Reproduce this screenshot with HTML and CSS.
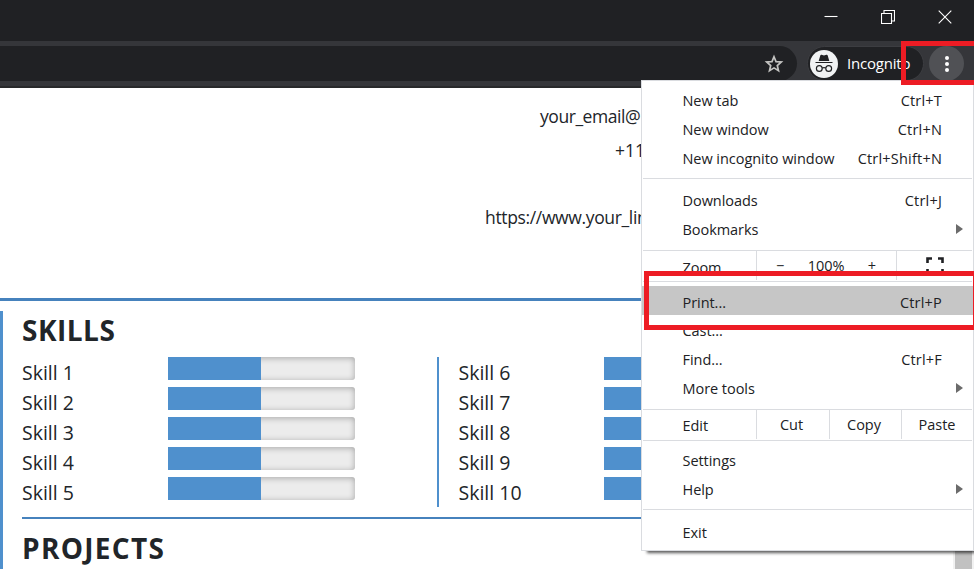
FILE: index.html
```html
<!DOCTYPE html>
<html lang="en">
<head>
<meta charset="utf-8">
<title>Resume</title>
<link rel="stylesheet" href="styles.css">
</head>
<body>
<div class="browser">
  <header class="titlebar">
    <svg width="14" height="14" viewBox="0 0 14 14"><path d="M.5 6.5h13"/></svg>
    <svg width="14" height="14" viewBox="0 0 14 14"><path d="M.5 3.5h10v10H.5zM3 3V.5h10.500v10.500H11"/></svg>
    <svg width="14" height="14" viewBox="0 0 14 14"><path d="M.7.7l12.600 12.600M13.300.7L.7 13.300"/></svg>
  </header>
  <div class="toolbar">
    <div class="address">
      <svg width="20" height="20" viewBox="0 0 20 20"><path d="M10 2.700l2 4.900 5.300.4-4 3.500 1.200 5.200L10 13.900l-4.500 2.800 1.200-5.200-4-3.500 5.300-.4z"/></svg>
    </div>
    <div class="profile">
      <svg width="28" height="28" viewBox="0 0 28 28"><circle cx="14" cy="14" r="14" fill="#f1f3f4"/><path d="M10.300 5.500q.3-1 1.300-.7l2.400.6 2.400-.6q1-.3 1.300.7L19.300 11H8.700zM5.500 12h17v1.100h-17z" fill="#202124"/><g fill="none" stroke="#202124" stroke-width="1.200"><circle cx="9.300" cy="18.500" r="2.900"/><circle cx="18.700" cy="18.500" r="2.900"/><path d="M12.200 18q1.800-.8 3.600 0"/></g></svg>
      <span>Incognito</span>
    </div>
    <div class="more"><i></i><i></i><i></i></div>
  </div>

  <main class="page">
    <section class="contact">
      <p class="email">your_email@</p>
      <p class="phone">+11</p>
      <p class="link">https://www.your_lin</p>
    </section>
    <section class="body">
      <h2 class="h-skills">SKILLS</h2>
      <div class="skills">
        <div class="col">
          <div class="skill"><span>Skill 1</span><div class="bar"><b></b></div></div>
          <div class="skill"><span>Skill 2</span><div class="bar"><b></b></div></div>
          <div class="skill"><span>Skill 3</span><div class="bar"><b></b></div></div>
          <div class="skill"><span>Skill 4</span><div class="bar"><b></b></div></div>
          <div class="skill"><span>Skill 5</span><div class="bar"><b></b></div></div>
        </div>
        <div class="col second">
          <div class="skill"><span>Skill 6</span><div class="bar"><b></b></div></div>
          <div class="skill"><span>Skill 7</span><div class="bar"><b></b></div></div>
          <div class="skill"><span>Skill 8</span><div class="bar"><b></b></div></div>
          <div class="skill"><span>Skill 9</span><div class="bar"><b></b></div></div>
          <div class="skill"><span>Skill 10</span><div class="bar"><b></b></div></div>
        </div>
      </div>
      <h2 class="h-projects">PROJECTS</h2>
    </section>
    <div class="scroll"></div>
  </main>

  <nav class="menu">
    <div class="group first">
      <div class="item"><span>New tab</span><kbd>Ctrl+T</kbd></div>
      <div class="item"><span>New window</span><kbd>Ctrl+N</kbd></div>
      <div class="item"><span>New incognito window</span><kbd>Ctrl+Shift+N</kbd></div>
    </div>
    <div class="group downloads">
      <div class="item"><span>Downloads</span><kbd>Ctrl+J</kbd></div>
      <div class="item sub"><span>Bookmarks</span></div>
    </div>
    <div class="split zoom">
      <div class="label">Zoom</div>
      <div class="cell level"><span>−</span><span>100%</span><span>+</span></div>
      <div class="cell full"><svg width="18" height="18" viewBox="0 0 18 18"><path d="M1.500 6V1.500H6M12 1.500h4.500V6M16.500 12v4.500H12M6 16.500H1.500V12"/></svg></div>
    </div>
    <div class="group tools">
      <div class="item active"><span>Print...</span><kbd>Ctrl+P</kbd></div>
      <div class="item"><span>Cast...</span></div>
      <div class="item"><span>Find...</span><kbd>Ctrl+F</kbd></div>
      <div class="item sub"><span>More tools</span></div>
    </div>
    <div class="split edit">
      <div class="label">Edit</div>
      <div class="cell">Cut</div>
      <div class="cell">Copy</div>
      <div class="cell">Paste</div>
    </div>
    <div class="group settings">
      <div class="item"><span>Settings</span></div>
      <div class="item sub"><span>Help</span></div>
    </div>
    <div class="group exit">
      <div class="item"><span>Exit</span></div>
    </div>
  </nav>
  <div class="mark mark-more"></div>
  <div class="mark mark-print"></div>
</div>
</body>
</html>
```
FILE: styles.css
```css
* { box-sizing: border-box; }
body { margin: 0; overflow: hidden; font-family: "Open Sans", "Noto Sans", sans-serif; font-weight: 400; color: #212529; }
.browser { position: relative; width: 974px; height: 569px; overflow: hidden; background: #fff; }
.titlebar { height: 41px; background: #202124; display: flex; justify-content: flex-end; gap: 43px; padding: 10px 22px 0 0; }
.titlebar svg { fill: none; stroke: #fff; stroke-width: 1.1; }

.toolbar { height: 47px; background: #35363a; border-bottom: 2px solid #28292b; display: flex; padding-top: 5px; }
.address { width: 797px; height: 35px; background: #202124; border-radius: 0 18px 18px 0; display: flex; justify-content: flex-end; align-items: center; padding-right: 13px; }
.address svg { fill: none; stroke: #c4c4c2; stroke-width: 1.7; }
.profile { margin-left: 10px; width: 117px; height: 35px; border: 1px solid #3c3d41; border-radius: 18px; background: #202124; display: flex; align-items: center; padding-left: 2px; gap: 9px; color: #fff; font-size: 15px; line-height: 20px; letter-spacing: -.2px; }
.profile span { padding-bottom: 2px; }
.more { margin-left: 5px; width: 35px; height: 35px; border-radius: 50%; background: #505155; display: flex; flex-direction: column; align-items: center; justify-content: center; gap: 2px; }
.more i { width: 4px; height: 4px; border-radius: 50%; background: #fff; }

.page { position: relative; height: 481px; }
.contact { height: 213px; padding-top: 12px; border-bottom: 3px solid #4682bd; font-size: 17.5px; }
.contact p { margin: 0; height: 33.500px; line-height: 33px; white-space: nowrap; }
.email { padding-left: 540px; letter-spacing: -.45px; }
.phone { padding-left: 615px; }
.contact .link { margin-top: 33px; padding-left: 485px; letter-spacing: -.35px; line-height: 34px; }
.body { margin-top: 10px; height: 258px; border-left: 3px solid #4f90cd; padding-left: 19px; }
h2 { margin: 0; font-size: 28px; font-weight: 700; white-space: nowrap; }
.h-skills { height: 46px; line-height: 39px; letter-spacing: .5px; }
.h-projects { line-height: 59px; letter-spacing: 1.3px; }
.skills { height: 162px; border-bottom: 2px solid #4682bd; display: flex; }
.col { width: 415px; height: 150px; flex: none; }
.second { border-left: 2px solid #4f90cd; padding-left: 19.500px; width: 436px; }
.skill { height: 30px; display: flex; font-size: 19.5px; line-height: 31px; }
.skill span { width: 146px; flex: none; }
.second .skill span { width: 145.500px; }
.bar { width: 187px; height: 23px; background: #ececec; border-radius: 3px; box-shadow: inset 0 1px 6px rgba(0,0,0,.3); }
.bar b { display: block; width: 93px; height: 23px; background: #4f90cd; }
.scroll { position: absolute; right: 0; top: 0; width: 21px; height: 481px; background: #c1c1c1; border: solid #f1f1f1; border-width: 0 2px; }

.menu { position: absolute; left: 641px; top: 80px; width: 333px; height: 471px; background: #fff; border: 1px solid #dadce0; box-shadow: 5px 3px 3px -1px rgba(0,0,0,.65); font-size: 14.5px; color: #202124; letter-spacing: -.05px; }
.group { margin: 0 1px; border-bottom: 1px solid #dadce0; }
.item { height: 29px; line-height: 28px; display: flex; justify-content: space-between; padding: 0 30px 0 39.500px; white-space: nowrap; }
kbd { font: inherit; letter-spacing: .2px; }
.sub { padding-right: 9px; align-items: center; line-height: 27px; }
.sub::after { content: ""; margin-bottom: 2px; border-left: 7px solid #6b6b6b; border-top: 5px solid transparent; border-bottom: 5px solid transparent; }
.downloads .sub span { margin-top: -2px; }
.downloads .sub::after { margin-bottom: 4px; }
.first { height: 98px; padding-top: 6px; }
.downloads { height: 72px; padding-top: 8px; }
.split { height: 31px; margin: 0 1px; border-bottom: 1px solid #dadce0; display: flex; line-height: 30px; }
.label { width: 113px; flex: none; padding-left: 39.500px; line-height: 32px; }
.zoom .label { line-height: 33px; }
.cell { border-left: 1px solid #dadce0; width: 73px; flex: none; text-align: center; height: 29px; padding-right: 3px; }
.edit .cell:nth-child(3) { width: 72px; }
.edit .cell:last-child { width: 72px; padding: 0 1px 0 0; }
.level { width: 140px; display: flex; justify-content: space-between; padding: 0 20px 0 19px; }
.full { width: 76px; padding: 6px 0 0; line-height: 0; }
.full svg { fill: none; stroke: #202124; stroke-width: 2.6; }
.tools { height: 128px; padding-top: 4px; }
.active { margin: 0 -1px; padding: 0 31px 0 40.500px; background: #c6c6c6; line-height: 33px; }
.tools .item:not(.active) { line-height: 31px; }
.tools .sub span { margin-top: 2px; }
.tools .sub::after { margin: 0; }
.settings { height: 69px; padding-top: 5px; }
.settings .item { line-height: 29px; }
.exit { border: 0; padding-top: 8px; }
.exit .item { line-height: 29px; }
.mark { position: absolute; border: 5px solid #ed1c24; }
.mark-more { left: 901px; top: 41px; width: 78px; height: 44px; }
.mark-print { left: 644px; top: 271px; width: 334px; height: 59px; }
```
